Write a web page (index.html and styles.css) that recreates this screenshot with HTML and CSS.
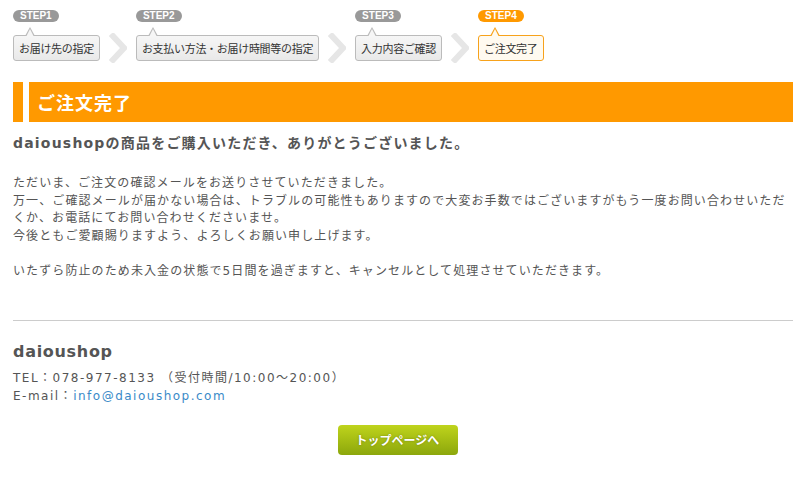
FILE: index.html
```html
<!DOCTYPE html>
<html lang="ja">
<head>
<meta charset="utf-8">
<title>ご注文完了</title>
<link rel="stylesheet" href="styles.css">
</head>
<body>
<div class="page">
  <ol class="steps">
    <li class="step">
      <span class="badge">STEP1</span>
      <span class="box">お届け先の指定</span>
    </li>
    <li class="sep"><svg width="18" height="30" viewBox="0 0 18 30"><polyline points="2,1 15,15 2,29" fill="none" stroke="#e6e6e6" stroke-width="6"/></svg></li>
    <li class="step">
      <span class="badge">STEP2</span>
      <span class="box">お支払い方法・お届け時間等の指定</span>
    </li>
    <li class="sep"><svg width="18" height="30" viewBox="0 0 18 30"><polyline points="2,1 15,15 2,29" fill="none" stroke="#e6e6e6" stroke-width="6"/></svg></li>
    <li class="step">
      <span class="badge">STEP3</span>
      <span class="box">入力内容ご確認</span>
    </li>
    <li class="sep"><svg width="18" height="30" viewBox="0 0 18 30"><polyline points="2,1 15,15 2,29" fill="none" stroke="#e6e6e6" stroke-width="6"/></svg></li>
    <li class="step current">
      <span class="badge">STEP4</span>
      <span class="box">ご注文完了</span>
    </li>
  </ol>

  <h1 class="title">ご注文完了</h1>

  <p class="thanks">daioushopの商品をご購入いただき、ありがとうございました。</p>

  <div class="message">
    <p>ただいま、ご注文の確認メールをお送りさせていただきました。<br>万一、ご確認メールが届かない場合は、トラブルの可能性もありますので大変お手数ではございますがもう一度お問い合わせいただくか、お電話にてお問い合わせくださいませ。<br>今後ともご愛顧賜りますよう、よろしくお願い申し上げます。</p>
    <p>いたずら防止のため未入金の状態で5日間を過ぎますと、キャンセルとして処理させていただきます。</p>
  </div>

  <div class="shop">
    <h2 class="shop-name">daioushop</h2>
    <p class="shop-info">TEL：078-977-8133 （受付時間/10:00〜20:00）<br>E-mail：<a class="mail" href="#">info@daioushop.com</a></p>
  </div>

  <div class="actions">
    <a class="btn" href="#">トップページへ</a>
  </div>
</div>
</body>
</html>
```

FILE: styles.css
```css
html, body {
  margin: 0;
  padding: 0;
  background: #fff;
}

body {
  font-family: "DejaVu Sans", "Noto Sans CJK JP", sans-serif;
  color: #555;
}

.page {
  padding: 10px 6px 0 13px;
}

.steps {
  list-style: none;
  margin: 0;
  padding: 0;
  display: flex;
  align-items: flex-end;
}

.step {
  display: flex;
  flex-direction: column;
  align-items: flex-start;
}

.badge {
  display: block;
  height: 12px;
  line-height: 12px;
  padding: 0 7px;
  border-radius: 6px;
  background: #999;
  color: #fff;
  font: bold 10px "Liberation Sans", Arial, sans-serif;
}

.box {
  position: relative;
  display: block;
  margin-top: 13px;
  height: 24px;
  line-height: 24px;
  padding: 0 5px;
  border: 1px solid #bbb;
  border-radius: 3px;
  background: linear-gradient(#f6f6f6, #e9e9e9);
  color: #333;
  font-family: "Noto Sans CJK JP", sans-serif;
  font-size: 11px;
  letter-spacing: -0.3px;
  white-space: nowrap;
}

.box::before,
.box::after {
  content: "";
  position: absolute;
  left: 11px;
  top: -9px;
  border-left: 5px solid transparent;
  border-right: 5px solid transparent;
  border-bottom: 9px solid #bbb;
}

.box::after {
  left: 12px;
  top: -7px;
  border-left-width: 4px;
  border-right-width: 4px;
  border-bottom: 8px solid #f6f6f6;
}

.current .badge {
  background: #f90;
}

.current .box {
  background: #fffaf0;
  border-color: #f7a21b;
}

.current .box::before {
  border-bottom-color: #f7a21b;
}

.current .box::after {
  border-bottom-color: #fffaf0;
}

.sep {
  display: flex;
  align-items: center;
  height: 30px;
  margin: 0 9px -2px 9px;
}

.title {
  margin: 21px 0 0 0;
  height: 40px;
  line-height: 40px;
  padding-left: 24px;
  background: linear-gradient(to right, #f90 0, #f90 10px, #fff 10px, #fff 16px, #f90 16px);
  color: #fff;
  font-family: "Noto Sans CJK JP", sans-serif;
  font-size: 18px;
  font-weight: bold;
  letter-spacing: 1px;
}

.thanks {
  margin: 10px 0 0 0;
  font-size: 14px;
  font-weight: bold;
  line-height: 22px;
  letter-spacing: 1.2px;
}

.message {
  margin-top: 21px;
  font-size: 12px;
  line-height: 17.6px;
  letter-spacing: 1.1px;
}

.message p {
  margin: 0 0 17.6px 0;
}

.shop {
  margin-top: 39px;
  border-top: 1px solid #ccc;
  padding-top: 19px;
}

.shop-name {
  margin: 0;
  font-size: 16px;
  line-height: 24px;
  letter-spacing: 0.7px;
  font-weight: bold;
}

.shop-info {
  margin: 5px 0 0 0;
  font-size: 12px;
  line-height: 18px;
  letter-spacing: 1.5px;
}

.mail {
  color: #3a8ac8;
  text-decoration: none;
}

.actions {
  margin-top: 20px;
  display: flex;
  justify-content: center;
  padding-right: 11px;
}

.btn {
  display: block;
  width: 120px;
  height: 30px;
  line-height: 30px;
  border-radius: 4px;
  background: linear-gradient(#bfd41c, #8ca70c);
  color: #fff;
  text-align: center;
  text-decoration: none;
  font-family: "Noto Sans CJK JP", sans-serif;
  font-size: 12px;
  font-weight: bold;
  text-shadow: 0 0 2px rgba(80, 90, 0, 0.6);
}
```
